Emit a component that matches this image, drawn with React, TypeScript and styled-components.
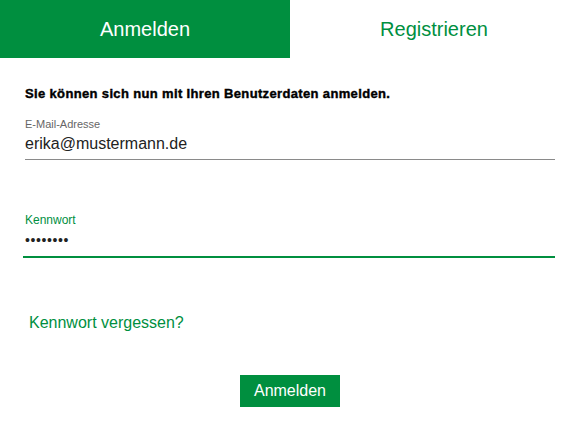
import styled, { createGlobalStyle } from "styled-components";

const green = "#008f3f";

const GlobalStyle = createGlobalStyle`
  body {
    margin: 0;
    background: #fff;
    font-family: "Liberation Sans", Arial, sans-serif;
  }
`;

const Tabs = styled.div`
  display: flex;
  height: 58px;
`;

const Tab = styled.div<{ $active?: boolean }>`
  display: flex;
  align-items: center;
  justify-content: center;
  font-size: 20px;
  background: ${(p) => (p.$active ? green : "#fff")};
  color: ${(p) => (p.$active ? "#fff" : green)};
  flex: ${(p) => (p.$active ? "0 0 290px" : "1")};
`;

const Form = styled.div`
  padding: 28px 23px 0 25px;
  display: flex;
  flex-direction: column;
`;

const Intro = styled.div`
  font-size: 13px;
  font-weight: bold;
  letter-spacing: 0.35px;
  -webkit-text-stroke: 0.4px #000;
  color: #000;
  margin-bottom: 16px;
`;

const Field = styled.div<{ $focused?: boolean }>`
  display: flex;
  flex-direction: column;
  border-bottom: ${(p) => (p.$focused ? `2px solid ${green}` : "1px solid #8a8a8a")};
  margin-left: ${(p) => (p.$focused ? "-2px" : "0")};
  padding-left: ${(p) => (p.$focused ? "2px" : "0")};
`;

const Label = styled.div<{ $focused?: boolean }>`
  font-size: ${(p) => (p.$focused ? "12px" : "11px")};
  color: ${(p) => (p.$focused ? green : "#666")};
  line-height: 14px;
`;

const Value = styled.div`
  font-size: 16px;
  color: #222;
  line-height: 22px;
  padding: 2px 0 4px;
`;

const Dots = styled.div`
  font-size: 14px;
  color: #222;
  letter-spacing: 0.6px;
  line-height: 16px;
  padding: 5px 0 8px;
`;

const Link = styled.a`
  color: ${green};
  font-size: 16px;
  text-decoration: none;
  margin: 56px 0 0 4px;
`;

const Actions = styled.div`
  display: flex;
  justify-content: center;
  margin-top: 43px;
`;

const Button = styled.button`
  background: ${green};
  color: #fff;
  border: none;
  width: 100px;
  height: 32px;
  font-family: "Liberation Sans", Arial, sans-serif;
  font-size: 16px;
  padding: 0;
`;

const Spacer = styled.div`
  height: 53px;
`;

export default function App() {
  return (
    <>
      <GlobalStyle />
      <Tabs>
        <Tab $active>Anmelden</Tab>
        <Tab>Registrieren</Tab>
      </Tabs>
      <Form>
        <Intro>Sie können sich nun mit Ihren Benutzerdaten anmelden.</Intro>
        <Field>
          <Label>E-Mail-Adresse</Label>
          <Value>erika@mustermann.de</Value>
        </Field>
        <Spacer />
        <Field $focused>
          <Label $focused>Kennwort</Label>
          <Dots>••••••••</Dots>
        </Field>
        <Link href="#">Kennwort vergessen?</Link>
        <Actions>
          <Button>Anmelden</Button>
        </Actions>
      </Form>
    </>
  );
}
